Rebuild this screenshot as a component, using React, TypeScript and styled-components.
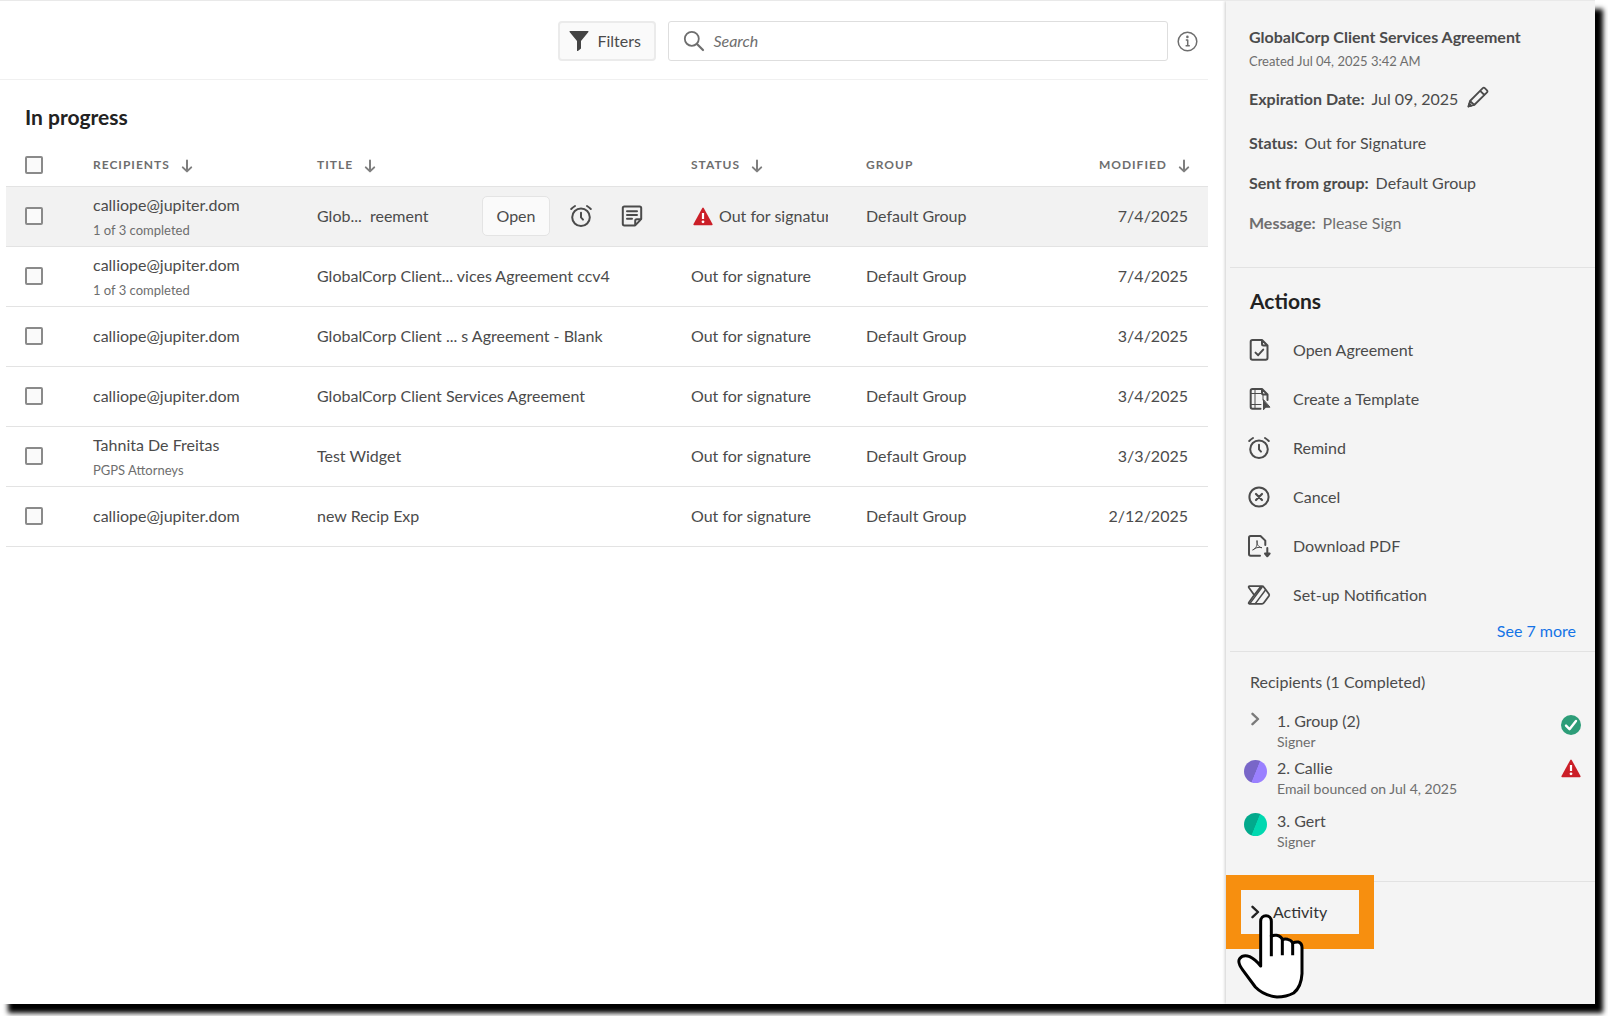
import React from "react";
import styled, { createGlobalStyle, css } from "styled-components";

const GlobalStyle = createGlobalStyle`
  *, *::before, *::after { box-sizing: border-box; }
  body {
    margin: 0;
    background: #fff;
    color: #4b4b4b;
    font: 400 16px/24px Lato, "Open Sans", sans-serif;
  }
  button, input { font: inherit; color: inherit; }
  h1, h2, h3, p, ul, ol, dl, dd { margin: 0; padding: 0; }
`;

/* ---------- frame ---------- */

const Frame = styled.div`
  display: flex;
  min-height: calc(100vh - 12px);
  margin: 0 13px 12px 0;
  background: #fff;
  border-top: 1px solid #e9e9e9;
  box-shadow: 8px 9px 5px #000;
`;

const Main = styled.main`
  flex: 1;
  min-width: 0;
  padding-right: 18px;
`;

/* ---------- toolbar ---------- */

const Toolbar = styled.div`
  display: flex;
  align-items: center;
  justify-content: flex-end;
  height: 79px;
  padding: 2px 10px 0 0;
  border-bottom: 1px solid #f0f0f0;
`;

const FilterButton = styled.button`
  display: flex;
  align-items: center;
  gap: 8px;
  width: 98px;
  height: 40px;
  padding: 0 9px;
  border: 2px solid #ebebeb;
  border-radius: 4px;
  background: #fafafa;
`;

const SearchBox = styled.label`
  display: flex;
  align-items: center;
  gap: 8px;
  width: 41.7%;
  height: 40px;
  margin: 0 9px 0 12px;
  padding: 0 14px;
  border: 1px solid #dedede;
  border-radius: 3px;
`;

const SearchInput = styled.input`
  flex: 1;
  min-width: 0;
  padding: 0;
  border: 0;
  outline: 0;
  background: none;
  &::placeholder {
    color: #6e6e6e;
    font-style: italic;
    opacity: 1;
  }
`;

const IconButton = styled.button`
  display: inline-flex;
  align-items: center;
  justify-content: center;
  padding: 0;
  border: 0;
  background: none;
  svg { display: block; }
`;

/* ---------- table ---------- */

const Heading = styled.h1`
  padding: 23px 0 1px 25px;
  color: #222;
  font-size: 21px;
  line-height: 28px;
  font-weight: 700;
`;

const Table = styled.table`
  width: calc(100% - 6px);
  margin-left: 6px;
  border-collapse: collapse;
  table-layout: fixed;
`;

const Col = styled.col<{ $w?: number }>`
  ${(p) => p.$w && css`width: ${p.$w}px;`}
`;

const Th = styled.th<{ $end?: boolean }>`
  height: 54px;
  padding: 13px ${(p) => (p.$end ? 18 : 0)}px 0 0;
  text-align: ${(p) => (p.$end ? "right" : "left")};
  color: #6e6e6e;
  font-size: 12px;
  line-height: 20px;
  font-weight: 700;
  letter-spacing: 1px;
  text-transform: uppercase;
`;

const SortLabel = styled.button`
  display: inline-flex;
  align-items: center;
  gap: 11px;
  padding: 0;
  border: 0;
  background: none;
  letter-spacing: inherit;
  text-transform: inherit;
`;

const Row = styled.tr<{ $active?: boolean }>`
  height: 60px;
  border-top: 1px solid #e3e3e3;
  border-bottom: 1px solid #e3e3e3;
  background: ${(p) => (p.$active ? "#f2f2f2" : "transparent")};
`;

const Td = styled.td<{ $end?: boolean }>`
  padding: 0 ${(p) => (p.$end ? 20 : 0)}px 0 0;
  text-align: ${(p) => (p.$end ? "right" : "left")};
  white-space: nowrap;
`;

const Check = styled.input`
  appearance: none;
  display: block;
  width: 18px;
  height: 18px;
  margin: 0 0 0 19px;
  border: 2px solid #8a8a8a;
  border-radius: 2px;
  background: #fafafa;
`;

const Name = styled.div`
  line-height: 24px;
`;

const Sub = styled.div`
  color: #6e6e6e;
  font-size: 13px;
  line-height: 20px;
  padding-top: 3px;
`;

const TitleCell = styled.div`
  display: flex;
  align-items: center;
  justify-content: space-between;
  padding-right: 48px;
  white-space: pre;
`;

const RowTools = styled.div`
  display: flex;
  align-items: center;
  gap: 19px;
`;

const IconGroup = styled.div`
  display: flex;
  gap: 28px;
`;

const OpenButton = styled.button`
  width: 68px;
  height: 40px;
  padding: 0;
  border: 1px solid #e4e4e4;
  border-radius: 5px;
  background: #fafafa;
`;

const StatusCell = styled.div`
  display: flex;
  align-items: center;
  gap: 6px;
  width: 137px;
  overflow: hidden;
  svg { flex: none; margin-left: 2px; }
`;

/* ---------- side panel ---------- */

const Panel = styled.aside`
  width: 369px;
  flex: none;
  padding-left: 4px;
  background: #f4f4f4;
  box-shadow: -1px 0 3px rgba(0, 0, 0, 0.2);
  clip-path: inset(0 0 0 -6px);
`;

const Section = styled.section<{ $pad: string }>`
  position: relative;
  padding: ${(p) => p.$pad};
  & + & { border-top: 1px solid #e2e2e2; }
`;

const PanelTitle = styled.h2`
  font-size: 16px;
  line-height: 24px;
  font-weight: 700;
`;

const Created = styled.p`
  color: #6e6e6e;
  font-size: 13px;
  margin-bottom: 10px;
`;

const Details = styled.dl`
  display: flex;
  flex-direction: column;
  gap: 16px;
`;

const Detail = styled.div<{ $h: number; $muted?: boolean }>`
  display: flex;
  align-items: center;
  gap: 7px;
  height: ${(p) => p.$h}px;
  color: ${(p) => (p.$muted ? "#6e6e6e" : "inherit")};
  dt { font-weight: 700; }
  button { margin: 0 0 4px 2px; }
`;

const SectionTitle = styled.h2`
  margin: 0 0 10px 3px;
  color: #222;
  font-size: 21px;
  line-height: 28px;
  font-weight: 700;
`;

const List = styled.ul`
  list-style: none;
`;

const ActionButton = styled.button`
  display: flex;
  align-items: center;
  gap: 22px;
  width: 100%;
  height: 49px;
  padding: 0;
  border: 0;
  background: none;
  text-align: left;
`;

const MoreLink = styled.a`
  display: block;
  width: max-content;
  margin-left: auto;
  color: #1473e6;
  text-decoration: none;
`;

const RecipientsTitle = styled.h3`
  margin: 0 0 16px 7px;
  font-size: 16px;
  line-height: 24px;
  font-weight: 400;
`;

const Recipient = styled.li<{ $group?: boolean }>`
  display: grid;
  grid-template-columns: 24px 1fr 20px;
  column-gap: 10px;
  margin-bottom: ${(p) => (p.$group ? 5 : 11)}px;
`;

const Marker = styled.span<{ $top: number }>`
  display: flex;
  justify-content: center;
  align-items: flex-start;
  padding-top: ${(p) => p.$top}px;
`;

const Avatar = styled.span<{ $a: string; $b: string }>`
  width: 23px;
  height: 23px;
  border-radius: 50%;
  background: linear-gradient(112deg, ${(p) => p.$a} 50%, ${(p) => p.$b} 52%);
`;

const RecipientName = styled.div`
  line-height: 22px;
`;

const RecipientNote = styled.div`
  color: #6e6e6e;
  font-size: 14px;
  line-height: 20px;
`;

const ActivityButton = styled.button`
  display: flex;
  align-items: center;
  gap: 13px;
  height: 24px;
  padding: 0;
  border: 0;
  background: none;
  color: #333;
`;

const Highlight = styled.div`
  position: absolute;
  top: -7px;
  left: -4px;
  width: 148px;
  height: 74px;
  border: 15px solid #f78f0f;
  pointer-events: none;
`;

const Pointer = styled.svg`
  position: absolute;
  top: 31px;
  left: 7px;
  pointer-events: none;
`;

/* ---------- icons ---------- */

const line = {
  fill: "none",
  stroke: "currentColor",
  strokeWidth: 1.8,
  strokeLinecap: "round" as const,
  strokeLinejoin: "round" as const,
};

const FunnelIcon = () => (
  <svg width="20" height="22" viewBox="0 0 20 22" fill="#444">
    <path d="M1 1h18q.8 0 .4 1L12 11v7.600L8.900 21q-.9.4-.9-.6V11L.6 2Q.2 1 1 1z" />
  </svg>
);

const SearchIcon = () => (
  <svg width="22" height="22" viewBox="0 0 22 22" {...line} stroke="#6e6e6e">
    <circle cx="8.8" cy="8.8" r="7" />
    <path d="M14 14l6 6" strokeWidth="2.2" />
  </svg>
);

const InfoIcon = () => (
  <svg width="21" height="21" viewBox="0 0 21 21" {...line} stroke="#6e6e6e" strokeWidth="1.5">
    <circle cx="10.5" cy="10.5" r="9.3" />
    <path d="M8.8 9h1.9v5.6M8.6 14.8h4.2" strokeLinecap="butt" />
    <circle cx="10.4" cy="5.9" r="1.3" fill="#6e6e6e" stroke="none" />
  </svg>
);

const SortIcon = () => (
  <svg width="12" height="16" viewBox="0 0 12 16" {...line} stroke="#7f7f7f" strokeWidth="2">
    <path d="M6 3.500v10.500M1.800 10.400L6 14.400l4.200-4" />
  </svg>
);

const ClockIcon = () => (
  <svg width="24" height="24" viewBox="0 0 24 24" {...line} strokeWidth="2">
    <circle cx="12" cy="13.200" r="8.800" />
    <path d="M12 8.800v4.600l2 2.200M2.200 5Q4 3.200 6 2M21.800 5Q20 3.200 18 2" />
  </svg>
);

const NoteIcon = () => (
  <svg width="22" height="22" viewBox="0 0 22 22" {...line} strokeWidth="2">
    <path d="M3.400 1.500h15.200q1.600 0 1.600 1.600v11l-6 6.300H3.400q-1.600 0-1.600-1.600V3.100q0-1.600 1.600-1.600zM20 14.200h-4.200q-1.600 0-1.600 1.600v4.400" />
    <path d="M6 6.200h10M6 10h10M6 13.800h5" />
  </svg>
);

const AlertIcon = () => (
  <svg width="20" height="19" viewBox="0 0 20 19" role="img" aria-label="Alert">
    <path d="M9.300.900q.700-1 1.400 0l8.800 16.200q.4 1-.7 1.200H1.200q-1.100-.2-.7-1.200z" fill="#cb1f28" />
    <path d="M10 6v6" stroke="#fff" strokeWidth="2.200" />
    <circle cx="10" cy="14.800" r="1.400" fill="#fff" />
  </svg>
);

const PencilIcon = () => (
  <svg width="22" height="22" viewBox="0 0 22 22" {...line}>
    <path d="M1.500 20.500L3 15 15.800 2.200q1-1 2 0L20 4.400q1 1 0 2L7.200 19zM13.200 4.800l4.200 4.200M3 15L7.200 19" />
    <path d="M1.500 20.500l.8-2.800 2 2z" fill="currentColor" />
  </svg>
);

const OpenDocIcon = () => (
  <svg width="24" height="24" viewBox="0 0 24 24" {...line} strokeWidth="2">
    <path d="M5.500 2H15l5.500 5.500V20q0 1.800-1.800 1.800H5.500Q3.700 21.800 3.700 20V3.800Q3.700 2 5.500 2zM15 2v4q0 1.500 1.500 1.500h4" />
    <path d="M8.500 14.600l2.700 2.600 5-5.600" />
  </svg>
);

const TemplateIcon = () => (
  <svg width="24" height="24" viewBox="0 0 24 24" {...line} strokeWidth="2">
    <path d="M13.500 21.800h-8Q3.700 21.800 3.700 20V3.800Q3.700 2 5.500 2H15l5.500 5.500V13M15 2v4q0 1.500 1.500 1.500h4" />
    <path d="M8 2v19.500M4 6.500h11M4 17.500h10M16 8v5" strokeWidth="1" />
    <path d="M16.500 13v9.800l2.300-2.600h3.800z" fill="currentColor" strokeWidth="1" />
  </svg>
);

const CancelIcon = () => (
  <svg width="24" height="24" viewBox="0 0 24 24" {...line} strokeWidth="2">
    <circle cx="12" cy="12" r="9.600" />
    <path d="M9 9l6 6M15 9l-6 6" strokeWidth="2.200" />
  </svg>
);

const PdfIcon = () => (
  <svg width="24" height="24" viewBox="0 0 24 24" {...line} strokeWidth="2">
    <path d="M13 21.700H3.700Q2 21.700 2 20V3.800Q2 2 3.700 2H13.500l4.800 4.600V11" />
    <path d="M6 15.800c3-1 4.600-4.500 4-9.300-.4 4.300 2 7 5 7.200-4-.8-6.500-.1-9 2.100z" strokeWidth="1" />
    <path d="M20.300 14v7M18 19.500l2.300 2.800 2.300-2.800z" fill="currentColor" />
  </svg>
);

const NotifyIcon = () => (
  <svg width="24" height="24" viewBox="0 0 24 24" {...line}>
    <path d="M2.500 3.200H15q1.200 0 1.900 1l5 6.800q.7 1 0 2l-5 6.800q-.7 1-1.900 1H2.500q-1.300-.2-.6-1.300L7.200 12 1.800 4.500q-.5-1.200.7-1.300z" />
    <path d="M7.200 12L13.500 3.800M8.500 20.400L18.300 7.200M3 20.400L15 4.200" strokeWidth="1.500" />
  </svg>
);

const Chevron = ({ color }: { color: string }) => (
  <svg width="9" height="14" viewBox="0 0 9 14" {...line} stroke={color} strokeWidth="2.400">
    <path d="M1.500 1.800L7 7l-5.500 5.200" />
  </svg>
);

const DoneIcon = () => (
  <svg width="20" height="20" viewBox="0 0 20 20" role="img" aria-label="Completed">
    <circle cx="10" cy="10" r="10" fill="#2d9d78" />
    <path d="M5 10.600l3.500 3.600L15 6" {...line} stroke="#fff" strokeWidth="2.400" />
  </svg>
);

/* ---------- data ---------- */

const rows = [
  { who: "calliope@jupiter.dom", sub: "1 of 3 completed", title: "Glob...  reement", date: "7/4/2025", active: true },
  { who: "calliope@jupiter.dom", sub: "1 of 3 completed", title: "GlobalCorp Client... vices Agreement ccv4", date: "7/4/2025" },
  { who: "calliope@jupiter.dom", title: "GlobalCorp Client ... s Agreement - Blank", date: "3/4/2025" },
  { who: "calliope@jupiter.dom", title: "GlobalCorp Client Services Agreement", date: "3/4/2025" },
  { who: "Tahnita De Freitas", sub: "PGPS Attorneys", title: "Test Widget", date: "3/3/2025" },
  { who: "calliope@jupiter.dom", title: "new Recip Exp", date: "2/12/2025" },
];

const actions = [
  { label: "Open Agreement", Icon: OpenDocIcon },
  { label: "Create a Template", Icon: TemplateIcon },
  { label: "Remind", Icon: ClockIcon },
  { label: "Cancel", Icon: CancelIcon },
  { label: "Download PDF", Icon: PdfIcon },
  { label: "Set-up Notification", Icon: NotifyIcon },
];

const Sortable = ({ children }: { children: string }) => (
  <SortLabel type="button">
    {children}
    <SortIcon />
  </SortLabel>
);

export default function App() {
  return (
    <>
      <GlobalStyle />
      <Frame>
        <Main>
          <Toolbar>
            <FilterButton type="button">
              <FunnelIcon />
              Filters
            </FilterButton>
            <SearchBox>
              <SearchIcon />
              <SearchInput type="text" placeholder="Search" aria-label="Search" />
            </SearchBox>
            <IconButton type="button" aria-label="Search help">
              <InfoIcon />
            </IconButton>
          </Toolbar>

          <Heading>In progress</Heading>
          <Table>
            <colgroup>
              <Col $w={87} />
              <Col $w={224} />
              <Col />
              <Col $w={175} />
              <Col $w={172} />
              <Col $w={170} />
            </colgroup>
            <thead>
              <tr>
                <Th><Check type="checkbox" aria-label="Select all agreements" /></Th>
                <Th><Sortable>Recipients</Sortable></Th>
                <Th><Sortable>Title</Sortable></Th>
                <Th><Sortable>Status</Sortable></Th>
                <Th>Group</Th>
                <Th $end><Sortable>Modified</Sortable></Th>
              </tr>
            </thead>
            <tbody>
              {rows.map((r, i) => (
                <Row key={i} $active={r.active}>
                  <Td><Check type="checkbox" aria-label={`Select ${r.title}`} /></Td>
                  <Td>
                    <Name>{r.who}</Name>
                    {r.sub && <Sub>{r.sub}</Sub>}
                  </Td>
                  <Td>
                    <TitleCell>
                      {r.title}
                      {r.active && (
                        <RowTools>
                          <OpenButton type="button">Open</OpenButton>
                          <IconGroup>
                            <IconButton type="button" aria-label="Remind"><ClockIcon /></IconButton>
                            <IconButton type="button" aria-label="Notes"><NoteIcon /></IconButton>
                          </IconGroup>
                        </RowTools>
                      )}
                    </TitleCell>
                  </Td>
                  <Td>
                    <StatusCell>
                      {r.active && <AlertIcon />}
                      Out for signature
                    </StatusCell>
                  </Td>
                  <Td>Default Group</Td>
                  <Td $end>{r.date}</Td>
                </Row>
              ))}
            </tbody>
          </Table>
        </Main>

        <Panel>
          <Section $pad="24px 19px 32px 19px">
            <PanelTitle>GlobalCorp Client Services Agreement</PanelTitle>
            <Created>Created Jul 04, 2025 3:42 AM</Created>
            <Details>
              <Detail $h={32}>
                <dt>Expiration Date:</dt>
                <dd>Jul 09, 2025</dd>
                <IconButton type="button" aria-label="Edit expiration date"><PencilIcon /></IconButton>
              </Detail>
              <Detail $h={24}><dt>Status:</dt><dd>Out for Signature</dd></Detail>
              <Detail $h={24}><dt>Sent from group:</dt><dd>Default Group</dd></Detail>
              <Detail $h={24} $muted><dt>Message:</dt><dd>Please Sign</dd></Detail>
            </Details>
          </Section>

          <Section $pad="19px 19px 8px 17px">
            <SectionTitle>Actions</SectionTitle>
            <List>
              {actions.map(({ label, Icon }) => (
                <li key={label}>
                  <ActionButton type="button">
                    <Icon />
                    {label}
                  </ActionButton>
                </li>
              ))}
            </List>
            <MoreLink href="#more">See 7 more</MoreLink>
          </Section>

          <Section $pad="18px 14px 18px 13px">
            <RecipientsTitle>Recipients (1 Completed)</RecipientsTitle>
            <List>
              <Recipient $group>
                <Marker $top={2}><Chevron color="#7a7a7a" /></Marker>
                <div>
                  <RecipientName>1. Group (2)</RecipientName>
                  <RecipientNote>Signer</RecipientNote>
                </div>
                <Marker $top={5}><DoneIcon /></Marker>
              </Recipient>
              <Recipient>
                <Marker $top={3}><Avatar $a="#7866c8" $b="#9a80ff" /></Marker>
                <div>
                  <RecipientName>2. Callie</RecipientName>
                  <RecipientNote>Email bounced on Jul 4, 2025</RecipientNote>
                </div>
                <Marker $top={2}><AlertIcon /></Marker>
              </Recipient>
              <Recipient>
                <Marker $top={3}><Avatar $a="#02a98c" $b="#00d8b0" /></Marker>
                <div>
                  <RecipientName>3. Gert</RecipientName>
                  <RecipientNote>Signer</RecipientNote>
                </div>
              </Recipient>
            </List>
          </Section>

          <Section $pad="18px 14px 18px 21px">
            <ActivityButton type="button" aria-expanded="false">
              <Chevron color="#222" />
              Activity
            </ActivityButton>
            <Highlight />
            <Pointer width="67" height="86" viewBox="80 818 201 258" fill="none" stroke="#000" strokeWidth="9" strokeLinejoin="round">
              <path
                fill="#fff"
                d="M151 977V843a16 17 0 0 1 32 0V888Q190 883 199 885Q213 888 216 898Q222 895 232 897Q244 900 247 908Q255 904 264 905Q275 908 275 922V1000Q273 1040 250 1058Q228 1070 200 1070Q160 1066 135 1040L98 990Q80 966 88 955Q98 942 118 949Q135 957 151 977Z"
              />
              <path d="M183 885V948M216 898V945M247 908V945" />
            </Pointer>
          </Section>
        </Panel>
      </Frame>
    </>
  );
}
